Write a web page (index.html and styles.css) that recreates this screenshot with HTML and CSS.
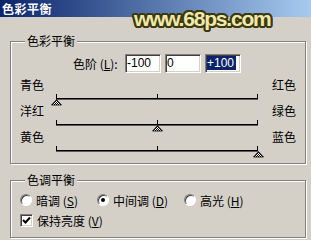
FILE: index.html
```html
<!DOCTYPE html>
<html lang="zh-CN">
<head>
  <meta charset="UTF-8">
  <title>色彩平衡</title>
  <link rel="stylesheet" href="styles.css">
</head>
<body>
  <div class="dialog">
    <div class="titlebar">色彩平衡</div>
    <div class="watermark">www.68ps.com</div>

    <div class="group balance">
      <div class="group-title">色彩平衡</div>
      <div class="levels">
        <span class="levels-label">色阶 (<u>L</u>):</span>
        <div class="field">-100</div>
        <div class="field">0</div>
        <div class="field"><span class="selected">+100</span></div>
      </div>
      <div class="slider">
        <div class="slider-labels"><span>青色</span><span>红色</span></div>
        <div class="track">
          <div class="rail"></div>
          <span class="tick"></span>
          <svg class="thumb" style="left: 0%" width="11" height="7" viewBox="0 0 11 7">
            <defs>
              <pattern id="hatch" width="2" height="2" patternUnits="userSpaceOnUse">
                <rect width="2" height="2" fill="#fff"/>
                <rect width="1" height="1" fill="#000"/>
                <rect x="1" y="1" width="1" height="1" fill="#000"/>
              </pattern>
            </defs>
            <path d="M5.5 0.5 L10.5 6 L0.5 6 Z" fill="url(#hatch)" stroke="#000" stroke-width="0.8"/>
          </svg>
        </div>
      </div>
      <div class="slider">
        <div class="slider-labels"><span>洋红</span><span>绿色</span></div>
        <div class="track">
          <div class="rail"></div>
          <span class="tick"></span>
          <svg class="thumb" style="left: 50%" width="11" height="7" viewBox="0 0 11 7">
            <path d="M5.5 0.5 L10.5 6 L0.5 6 Z" fill="url(#hatch)" stroke="#000" stroke-width="0.8"/>
          </svg>
        </div>
      </div>
      <div class="slider">
        <div class="slider-labels"><span>黄色</span><span>蓝色</span></div>
        <div class="track">
          <div class="rail"></div>
          <span class="tick"></span>
          <svg class="thumb" style="left: 100%" width="11" height="7" viewBox="0 0 11 7">
            <path d="M5.5 0.5 L10.5 6 L0.5 6 Z" fill="url(#hatch)" stroke="#000" stroke-width="0.8"/>
          </svg>
        </div>
      </div>
    </div>

    <div class="group tone">
      <div class="group-title">色调平衡</div>
      <div class="options">
        <label class="option"><span class="radio"></span>暗调 (<u>S</u>)</label>
        <label class="option"><span class="radio checked"></span>中间调 (<u>D</u>)</label>
        <label class="option"><span class="radio"></span>高光 (<u>H</u>)</label>
      </div>
      <label class="option keep">
        <span class="checkbox">
          <svg width="9" height="9" viewBox="0 0 9 9"><path d="M1 4 L3.5 6.5 L8 1.5" fill="none" stroke="#000" stroke-width="2"/></svg>
        </span>保持亮度 (<u>V</u>)
      </label>
    </div>
  </div>
</body>
</html>
```

FILE: styles.css
```css
html, body {
  margin: 0;
  padding: 0;
}
body {
  background-color: #d4d0c8;
  font: 12px "Noto Sans CJK SC", sans-serif;
  color: #000;
}
.dialog {
  position: relative;
  width: 311px;
  height: 240px;
  overflow: hidden;
}
.titlebar {
  height: 17px;
  line-height: 17px;
  padding-left: 2px;
  color: #fff;
  font-weight: bold;
  letter-spacing: 0.5px;
  background: linear-gradient(to right, #0a246a, #a6caf0);
}
.watermark {
  position: absolute;
  top: 8px;
  left: 134px;
  font: bold 21px/21px "Liberation Sans", sans-serif;
  letter-spacing: -1.2px;
  color: #f2e8ac;
  text-shadow:
    2px 0 #3a3a10, -2px 0 #3a3a10, 0 2px #3a3a10, 0 -2px #3a3a10,
    1px 1px #3a3a10, -1px -1px #3a3a10, 1px -1px #3a3a10, -1px 1px #3a3a10,
    2px 1px #3a3a10, 2px -1px #3a3a10, -2px 1px #3a3a10, -2px -1px #3a3a10,
    1px 2px #3a3a10, -1px 2px #3a3a10, 1px -2px #3a3a10, -1px -2px #3a3a10;
}
.group {
  margin: 24px 5px 0 10px;
  padding: 0 9px 7px 9px;
  border: 1px solid #808080;
  box-shadow: inset 1px 1px 0 #fff, 1px 1px 0 #fff;
}
.group-title {
  width: fit-content;
  height: 14px;
  line-height: 14px;
  margin: -8px 0 0 5px;
  padding: 0 2px;
  background-color: #d4d0c8;
}
.levels {
  display: flex;
  align-items: center;
  height: 19px;
  margin: 6px 0 0 53px;
}
.levels-label {
  width: 50px;
  margin-right: 2px;
  white-space: nowrap;
}
.field {
  box-sizing: border-box;
  width: 36px;
  height: 19px;
  margin-right: 4px;
  padding: 1px 0 0 1px;
  font: 12px/14px "Liberation Sans", sans-serif;
  background-color: #fff;
  border: 1px solid;
  border-color: #808080 #fff #fff #808080;
  box-shadow: inset 1px 1px 0 #404040, inset -1px -1px 0 #d4d0c8;
}
.selected {
  display: inline-block;
  padding: 0 2px 0 0;
  color: #fff;
  background-color: #0a246a;
}
.levels + .slider {
  margin-top: 5px;
}
.slider-labels {
  display: flex;
  justify-content: space-between;
  height: 14px;
  line-height: 14px;
}
.track {
  position: relative;
  width: 202px;
  height: 12px;
  margin-left: 36px;
}
.rail {
  position: relative;
  top: 6px;
  height: 1px;
  background-color: #000;
  box-shadow: 0 1px 0 #5a5a5a;
}
.track::before,
.track::after,
.tick {
  content: "";
  position: absolute;
  top: 2px;
  width: 1px;
  height: 4px;
  background-color: #000;
}
.track::before {
  left: 0;
}
.track::after {
  right: 0;
}
.tick {
  left: 101px;
}
.thumb {
  position: absolute;
  top: 7px;
  margin-left: -5px;
}
.tone {
  margin-top: 16px;
  padding-bottom: 10px;
}
.options {
  display: grid;
  grid-template-columns: 77px 87px auto;
  height: 14px;
  margin-top: 6px;
}
.option {
  display: flex;
  align-items: center;
  height: 14px;
  white-space: nowrap;
}
.radio {
  position: relative;
  box-sizing: border-box;
  width: 12px;
  height: 12px;
  margin-right: 4px;
  border-radius: 50%;
  background-color: #fff;
  border: 1px solid;
  border-color: #808080 #fff #fff #808080;
  box-shadow: inset 1px 1px 0 #404040;
}
.radio.checked::after {
  content: "";
  position: absolute;
  top: 3px;
  left: 3px;
  width: 4px;
  height: 4px;
  border-radius: 50%;
  background-color: #000;
}
.keep {
  margin-top: 6px;
}
.checkbox {
  box-sizing: border-box;
  display: flex;
  align-items: center;
  justify-content: center;
  width: 13px;
  height: 13px;
  margin-right: 4px;
  background-color: #fff;
  border: 1px solid;
  border-color: #808080 #fff #fff #808080;
  box-shadow: inset 1px 1px 0 #404040, inset -1px -1px 0 #d4d0c8;
}
```
